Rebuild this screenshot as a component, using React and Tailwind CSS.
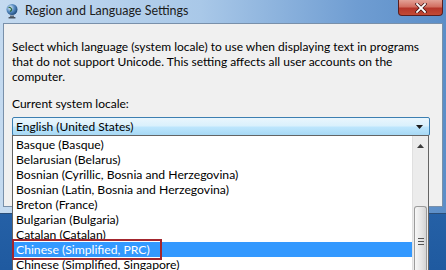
import React from "react";

const LOCALES = [
  "Basque (Basque)",
  "Belarusian (Belarus)",
  "Bosnian (Cyrillic, Bosnia and Herzegovina)",
  "Bosnian (Latin, Bosnia and Herzegovina)",
  "Breton (France)",
  "Bulgarian (Bulgaria)",
  "Catalan (Catalan)",
  "Chinese (Simplified, PRC)",
  "Chinese (Simplified, Singapore)",
];

const SELECTED = "Chinese (Simplified, PRC)";

function GlobeIcon() {
  return (
    <svg width="14" height="16" viewBox="0 0 14 16">
      <defs>
        <radialGradient id="g" cx="0.35" cy="0.35" r="0.7">
          <stop offset="0" stopColor="#e8f2fb" />
          <stop offset="0.5" stopColor="#5b8fc4" />
          <stop offset="1" stopColor="#1d4a7c" />
        </radialGradient>
      </defs>
      <circle cx="7" cy="6.5" r="5.5" fill="url(#g)" />
      <path d="M3.5 4.5c1.5-.5 2.5.5 3 1.5s-.5 2-1.5 2.5" stroke="#2e6a3b" strokeWidth="1.2" fill="none" />
      <rect x="5" y="12.5" width="4" height="1.5" fill="#5e6b78" />
      <rect x="3.5" y="14" width="7" height="1.5" rx="0.5" fill="#47525e" />
    </svg>
  );
}

function CloseButton() {
  return (
    <div className="flex items-center justify-center w-[45px] h-[16px] mr-[3px] rounded-b-[4px] border border-t-0 border-[#5a1e1e] bg-[linear-gradient(to_bottom,#e3a196_0%,#d26f61_45%,#b5362a_55%,#c24a35_100%)]">
      <svg width="12" height="10" viewBox="0 0 12 10">
        <path d="M2 1l8 8M10 1l-8 8" stroke="#3a1010" strokeWidth="3.2" strokeLinecap="square" />
        <path d="M2 1l8 8M10 1l-8 8" stroke="#ffffff" strokeWidth="1.8" strokeLinecap="square" />
      </svg>
    </div>
  );
}

function Scrollbar() {
  return (
    <div className="flex flex-col w-[16px] h-full bg-[#ececec] border-l border-[#e0e0e0]">
      <div className="flex items-center justify-center h-[17px] pt-[3px]">
        <svg width="7" height="4" viewBox="0 0 7 4">
          <path d="M0 4L3.5 0L7 4z" fill="#3c3c3c" />
        </svg>
      </div>
      <div className="h-[53px]" />
      <div className="flex-1 mx-[1px] rounded-t-[3px] border border-b-0 border-[#9b9b9b] bg-[linear-gradient(to_right,#f7f7f7,#e4e4e4_60%,#d4d4d4)] flex flex-col items-center pt-[31px] gap-[2px]">
        <div className="w-[6px] h-[1px] bg-[#555]" />
        <div className="w-[6px] h-[1px] bg-[#555]" />
        <div className="w-[6px] h-[1px] bg-[#555]" />
      </div>
    </div>
  );
}

export default function App() {
  return (
    <div
      className="relative w-[446px] h-[270px] overflow-hidden bg-[linear-gradient(to_bottom,#3b78bd,#1f5aa0)] text-[12px] text-black"
      style={{ fontFamily: '"Segoe UI", Lato, "Open Sans", sans-serif' }}
    >
      <div className="flex flex-col h-[214px] px-[3px] pb-[6px] border-b border-[#2b4e78] bg-[linear-gradient(to_right,#c4daf0,#a9c8e8_45%,#6f9dd2_80%,#5b8ec8)]">
        <div className="flex items-start h-[23px] -mx-[3px]">
          <div className="flex items-center h-[22px] pl-[5px] gap-[6px] flex-1">
            <GlobeIcon />
            <span className="text-[12.5px] text-[#1b1b1b]">Region and Language Settings</span>
          </div>
          <CloseButton />
        </div>
        <div className="flex-1 flex flex-col bg-[#f0f0f0] border border-[#7990aa] pl-[8px] pr-[12px] pt-[15px]">
          <p className="leading-[15px]">
            Select which language (system locale) to use when displaying text in programs that do not support
            Unicode. This setting affects all user accounts on the computer.
          </p>
          <p className="leading-[15px] mt-[12px]">Current system locale:</p>
          <div className="flex items-center justify-between h-[19px] mt-[6px] px-[3px] border border-[#3c7fb1] rounded-[2px] bg-[linear-gradient(to_bottom,#eaf6fd_0%,#d9f0fc_48%,#bee6fd_52%,#a7d9f5_100%)]">
            <span className="leading-[15px]">English (United States)</span>
            <svg width="7" height="4" viewBox="0 0 7 4" className="mr-[3px]">
              <path d="M0 0L7 0L3.5 4z" fill="#1b1b1b" />
            </svg>
          </div>
        </div>
      </div>

      <div className="absolute left-[12px] top-[135px] w-[417px] h-[140px] flex bg-white border border-[#646464] text-[12.2px]">
        <div className="flex-1 flex flex-col pt-[1px]">
          {LOCALES.map((name) => (
            <div
              key={name}
              className={`h-[15px] leading-[15px] px-[3px] whitespace-nowrap ${
                name === SELECTED ? "bg-[#3399ff] text-white" : ""
              }`}
            >
              {name}
            </div>
          ))}
        </div>
        <Scrollbar />
      </div>

      <div className="absolute left-[12px] top-[239px] w-[150px] h-[21px] border-2 border-[#a3262e]" />
    </div>
  );
}
